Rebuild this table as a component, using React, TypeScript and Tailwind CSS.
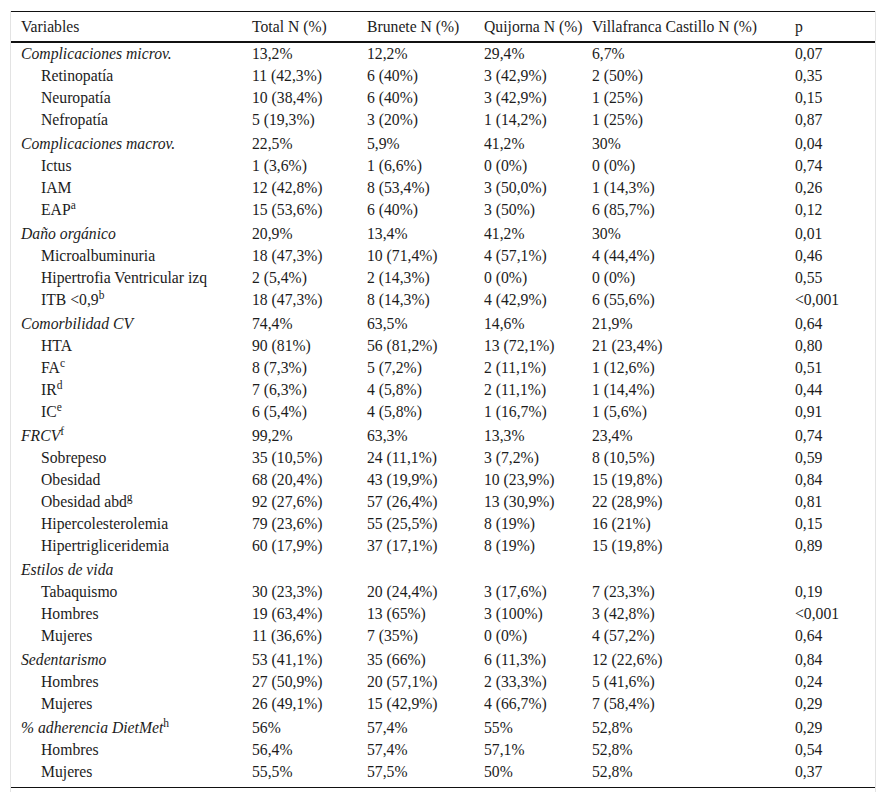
type Row = {
  label: string
  sup?: string
  group?: boolean
  cells: string[]
}

const rows: Row[] = [
  { label: 'Complicaciones microv.', group: true, cells: ['13,2%', '12,2%', '29,4%', '6,7%', '0,07'] },
  { label: 'Retinopatía', cells: ['11 (42,3%)', '6 (40%)', '3 (42,9%)', '2 (50%)', '0,35'] },
  { label: 'Neuropatía', cells: ['10 (38,4%)', '6 (40%)', '3 (42,9%)', '1 (25%)', '0,15'] },
  { label: 'Nefropatía', cells: ['5 (19,3%)', '3 (20%)', '1 (14,2%)', '1 (25%)', '0,87'] },
  { label: 'Complicaciones macrov.', group: true, cells: ['22,5%', '5,9%', '41,2%', '30%', '0,04'] },
  { label: 'Ictus', cells: ['1 (3,6%)', '1 (6,6%)', '0 (0%)', '0 (0%)', '0,74'] },
  { label: 'IAM', cells: ['12 (42,8%)', '8 (53,4%)', '3 (50,0%)', '1 (14,3%)', '0,26'] },
  { label: 'EAP', sup: 'a', cells: ['15 (53,6%)', '6 (40%)', '3 (50%)', '6 (85,7%)', '0,12'] },
  { label: 'Daño orgánico', group: true, cells: ['20,9%', '13,4%', '41,2%', '30%', '0,01'] },
  { label: 'Microalbuminuria', cells: ['18 (47,3%)', '10 (71,4%)', '4 (57,1%)', '4 (44,4%)', '0,46'] },
  { label: 'Hipertrofia Ventricular izq', cells: ['2 (5,4%)', '2 (14,3%)', '0 (0%)', '0 (0%)', '0,55'] },
  { label: 'ITB <0,9', sup: 'b', cells: ['18 (47,3%)', '8 (14,3%)', '4 (42,9%)', '6 (55,6%)', '<0,001'] },
  { label: 'Comorbilidad CV', group: true, cells: ['74,4%', '63,5%', '14,6%', '21,9%', '0,64'] },
  { label: 'HTA', cells: ['90 (81%)', '56 (81,2%)', '13 (72,1%)', '21 (23,4%)', '0,80'] },
  { label: 'FA', sup: 'c', cells: ['8 (7,3%)', '5 (7,2%)', '2 (11,1%)', '1 (12,6%)', '0,51'] },
  { label: 'IR', sup: 'd', cells: ['7 (6,3%)', '4 (5,8%)', '2 (11,1%)', '1 (14,4%)', '0,44'] },
  { label: 'IC', sup: 'e', cells: ['6 (5,4%)', '4 (5,8%)', '1 (16,7%)', '1 (5,6%)', '0,91'] },
  { label: 'FRCV', sup: 'f', group: true, cells: ['99,2%', '63,3%', '13,3%', '23,4%', '0,74'] },
  { label: 'Sobrepeso', cells: ['35 (10,5%)', '24 (11,1%)', '3 (7,2%)', '8 (10,5%)', '0,59'] },
  { label: 'Obesidad', cells: ['68 (20,4%)', '43 (19,9%)', '10 (23,9%)', '15 (19,8%)', '0,84'] },
  { label: 'Obesidad abd', sup: 'g', cells: ['92 (27,6%)', '57 (26,4%)', '13 (30,9%)', '22 (28,9%)', '0,81'] },
  { label: 'Hipercolesterolemia', cells: ['79 (23,6%)', '55 (25,5%)', '8 (19%)', '16 (21%)', '0,15'] },
  { label: 'Hipertrigliceridemia', cells: ['60 (17,9%)', '37 (17,1%)', '8 (19%)', '15 (19,8%)', '0,89'] },
  { label: 'Estilos de vida', group: true, cells: ['', '', '', '', ''] },
  { label: 'Tabaquismo', cells: ['30 (23,3%)', '20 (24,4%)', '3 (17,6%)', '7 (23,3%)', '0,19'] },
  { label: 'Hombres', cells: ['19 (63,4%)', '13 (65%)', '3 (100%)', '3 (42,8%)', '<0,001'] },
  { label: 'Mujeres', cells: ['11 (36,6%)', '7 (35%)', '0 (0%)', '4 (57,2%)', '0,64'] },
  { label: 'Sedentarismo', group: true, cells: ['53 (41,1%)', '35 (66%)', '6 (11,3%)', '12 (22,6%)', '0,84'] },
  { label: 'Hombres', cells: ['27 (50,9%)', '20 (57,1%)', '2 (33,3%)', '5 (41,6%)', '0,24'] },
  { label: 'Mujeres', cells: ['26 (49,1%)', '15 (42,9%)', '4 (66,7%)', '7 (58,4%)', '0,29'] },
  { label: '% adherencia DietMet', sup: 'h', group: true, cells: ['56%', '57,4%', '55%', '52,8%', '0,29'] },
  { label: 'Hombres', cells: ['56,4%', '57,4%', '57,1%', '52,8%', '0,54'] },
  { label: 'Mujeres', cells: ['55,5%', '57,5%', '50%', '52,8%', '0,37'] },
]

const headers = ['Variables', 'Total N (%)', 'Brunete N (%)', 'Quijorna N (%)', 'Villafranca Castillo N (%)', 'p']

export default function App() {
  return (
    <div className="min-h-[801px] bg-white pt-[11px] pl-[10px] font-['Liberation_Serif','Times_New_Roman',serif]">
      <div className="w-[866px] border-x border-[#e3e3e3] pb-[4px]">
        <table className="w-full table-fixed border-collapse font-['Liberation_Serif','Times_New_Roman',serif] text-[15.7px] leading-[22px] text-[#1c1c1c]">
          <colgroup>
            <col className="w-[231px]" />
            <col className="w-[115px]" />
            <col className="w-[117px]" />
            <col className="w-[108px]" />
            <col className="w-[203px]" />
            <col className="w-[90px]" />
          </colgroup>
          <thead>
            <tr className="border-t border-b-2 border-t-[#111] border-b-[#111]">
              {headers.map((h) => (
                <th key={h} className="h-[30px] pl-[10px] pt-[2px] text-left align-middle font-normal whitespace-nowrap">
                  {h}
                </th>
              ))}
            </tr>
          </thead>
          <tbody className="border-b border-[#111]">
            {rows.map((r, i) => {
              const extra = r.group && i > 0
              const last = i === rows.length - 1
              return (
                <tr key={i}>
                  <td
                    className={`whitespace-nowrap align-top ${r.group ? 'pl-[10px] italic' : 'pl-[30px]'} ${
                      extra ? 'pt-[2px]' : ''
                    } ${last ? 'pb-[4px]' : ''}`}
                  >
                    {r.label}
                    {r.sup && <sup className="not-italic text-[11.5px]">{r.sup}</sup>}
                  </td>
                  {r.cells.map((c, j) => (
                    <td
                      key={j}
                      className={`whitespace-nowrap pl-[10px] align-top ${extra ? 'pt-[2px]' : ''} ${
                        last ? 'pb-[4px]' : ''
                      }`}
                    >
                      {c}
                    </td>
                  ))}
                </tr>
              )
            })}
          </tbody>
        </table>
      </div>
    </div>
  )
}
